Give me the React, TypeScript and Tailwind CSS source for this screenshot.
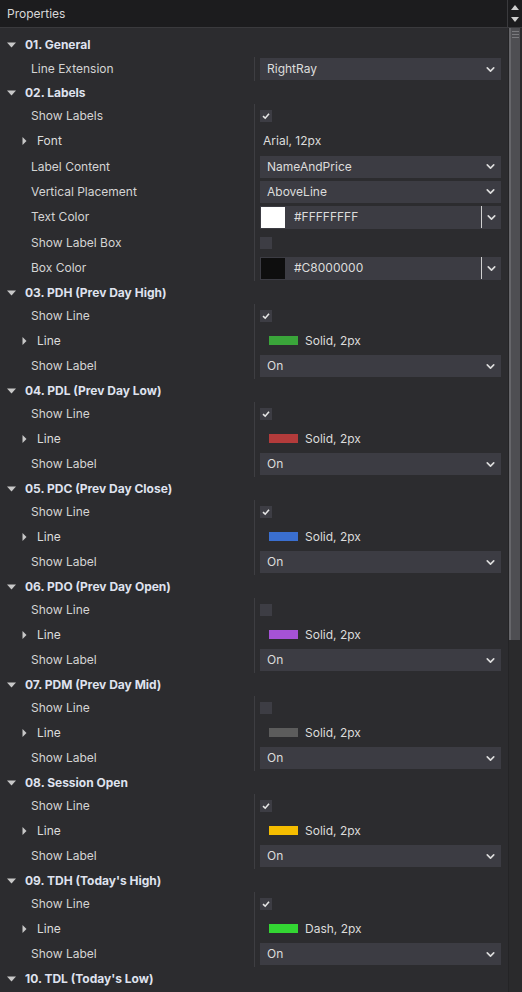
import { ChevronDown } from 'lucide-react';

type Row =
  | { kind: 'header'; label: string; h: number }
  | { kind: 'select'; label: string; value: string; h: number }
  | { kind: 'check'; label: string; checked: boolean; h: number }
  | { kind: 'font'; label: string; value: string; h: number }
  | { kind: 'color'; label: string; value: string; swatch: string; h: number }
  | { kind: 'line'; label: string; value: string; swatch: string; h: number };

const HEIGHTS: Record<number, string> = {
  23: 'h-[23px]',
  24: 'h-[24px]',
  25: 'h-[25px]',
  26: 'h-[26px]',
};

const LINE_SECTIONS = [
  { title: '03. PDH (Prev Day High)', show: true, swatch: 'bg-[#3aa53a]', style: 'Solid, 2px' },
  { title: '04. PDL (Prev Day Low)', show: true, swatch: 'bg-[#b33b3b]', style: 'Solid, 2px' },
  { title: '05. PDC (Prev Day Close)', show: true, swatch: 'bg-[#3a6fd0]', style: 'Solid, 2px' },
  { title: '06. PDO (Prev Day Open)', show: false, swatch: 'bg-[#a552d6]', style: 'Solid, 2px' },
  { title: '07. PDM (Prev Day Mid)', show: false, swatch: 'bg-[#5c5c5c]', style: 'Solid, 2px' },
  { title: '08. Session Open', show: true, swatch: 'bg-[#f5bd00]', style: 'Solid, 2px' },
  { title: "09. TDH (Today's High)", show: true, swatch: 'bg-[#33d633]', style: 'Dash, 2px' },
];

const ROWS: Row[] = [
  { kind: 'header', label: '01. General', h: 24 },
  { kind: 'select', label: 'Line Extension', value: 'RightRay', h: 24 },
  { kind: 'header', label: '02. Labels', h: 23 },
  { kind: 'check', label: 'Show Labels', checked: true, h: 24 },
  { kind: 'font', label: 'Font', value: 'Arial, 12px', h: 26 },
  { kind: 'select', label: 'Label Content', value: 'NameAndPrice', h: 25 },
  { kind: 'select', label: 'Vertical Placement', value: 'AboveLine', h: 25 },
  { kind: 'color', label: 'Text Color', value: '#FFFFFFFF', swatch: 'bg-white', h: 26 },
  { kind: 'check', label: 'Show Label Box', checked: false, h: 25 },
  { kind: 'color', label: 'Box Color', value: '#C8000000', swatch: 'bg-[#0e0e0e]', h: 26 },
  ...LINE_SECTIONS.flatMap((s): Row[] => [
    { kind: 'header', label: s.title, h: 23 },
    { kind: 'check', label: 'Show Line', checked: s.show, h: 24 },
    { kind: 'line', label: 'Line', value: s.style, swatch: s.swatch, h: 25 },
    { kind: 'select', label: 'Show Label', value: 'On', h: 26 },
  ]),
  { kind: 'header', label: "10. TDL (Today's Low)", h: 23 },
];

function DownTriangle() {
  return (
    <svg width="9" height="6" viewBox="0 0 9 6" className="shrink-0">
      <path d="M0 0.5 L9 0.5 L4.5 5.5 Z" fill="#c8c8c8" />
    </svg>
  );
}

function RightTriangle() {
  return (
    <svg width="5" height="8" viewBox="0 0 5 8" className="shrink-0">
      <path d="M0.5 0 L4.5 4 L0.5 8 Z" fill="#c8c8c8" />
    </svg>
  );
}

function Check({ checked }: { checked: boolean }) {
  return (
    <div className="w-[12px] h-[12px] bg-[#3d3d44] flex items-center justify-center">
      {checked && (
        <svg width="8" height="8" viewBox="0 0 8 8">
          <path d="M1 4.2 L3.2 6.2 L7 1.8" stroke="#e6e6e6" strokeWidth="1.6" fill="none" />
        </svg>
      )}
    </div>
  );
}

function Value({ row }: { row: Row }) {
  switch (row.kind) {
    case 'select':
      return (
        <div className="h-[22px] flex-1 bg-[#3c3c43] flex items-center pl-[7px] pr-[4px] text-[#dcdcdc]">
          <span className="flex-1">{row.value}</span>
          <ChevronDown size={13} strokeWidth={3} color="#dcdcdc" />
        </div>
      );
    case 'check':
      return <Check checked={row.checked} />;
    case 'font':
      return <span className="pl-[3px] text-[#dcdcdc]">{row.value}</span>;
    case 'color':
      return (
        <div className="h-[23px] flex-1 bg-[#3c3c43] flex items-center text-[#dcdcdc]">
          <div className={`w-[24px] h-[21px] ml-[1px] ${row.swatch}`} />
          <span className="flex-1 pl-[9px]">{row.value}</span>
          <div className="w-px h-[22px] bg-[#d0d0d0]" />
          <div className="w-[19px] flex justify-center">
            <ChevronDown size={13} strokeWidth={3} color="#dcdcdc" />
          </div>
        </div>
      );
    case 'line':
      return (
        <div className="flex items-center gap-[7px] pl-[9px] text-[#dcdcdc]">
          <div className={`w-[29px] h-[9px] ${row.swatch}`} />
          <span>{row.value}</span>
        </div>
      );
    default:
      return null;
  }
}

function PropertyRow({ row }: { row: Row }) {
  if (row.kind === 'header') {
    return (
      <div className={`${HEIGHTS[row.h]} flex items-center pl-[7px] gap-[9px]`}>
        <DownTriangle />
        <span className="font-bold text-[#dfe2ee]">{row.label}</span>
      </div>
    );
  }
  const expandable = row.kind === 'font' || row.kind === 'line';
  return (
    <div className={`${HEIGHTS[row.h]} flex items-center`}>
      <div className="w-[254px] flex items-center">
        {expandable ? (
          <div className="flex items-center pl-[22px] gap-[10px]">
            <RightTriangle />
            <span className="text-[#dcdcdc]">{row.label}</span>
          </div>
        ) : (
          <span className="pl-[31px] text-[#d4d4d4]">{row.label}</span>
        )}
      </div>
      <div className="w-px self-stretch bg-[#3e3e42]" />
      <div className="flex-1 flex items-center pl-[5px] pr-[7px]">
        <Value row={row} />
      </div>
    </div>
  );
}

export default function App() {
  return (
    <div
      className="w-[522px] h-[992px] overflow-hidden bg-[#2c2c2f] flex flex-col text-[12px] leading-none"
      style={{ fontFamily: 'Inter, "Noto Sans", sans-serif' }}
    >
      <div className="h-[28px] shrink-0 flex bg-[#1c1c1e] border-b border-[#3a3a3d]">
        <div className="flex-1 flex items-center pl-[7px] text-[#d8d8d8] text-[12px]">Properties</div>
        <div className="w-[15px] border-l border-[#3a3a3d] flex flex-col items-center justify-center gap-[7px]">
          <svg width="8" height="5" viewBox="0 0 8 5">
            <path d="M0 5 L4 0 L8 5 Z" fill="#cfcfcf" />
          </svg>
          <svg width="8" height="5" viewBox="0 0 8 5">
            <path d="M0 0 L8 0 L4 5 Z" fill="#cfcfcf" />
          </svg>
        </div>
      </div>
      <div className="flex-1 flex min-h-0">
        <div className="flex-1 pt-[5px] overflow-hidden">
          {ROWS.map((row, i) => (
            <PropertyRow key={i} row={row} />
          ))}
        </div>
        <div className="w-[14px] bg-[#2a2a2c] border-l border-[#242426] flex flex-col">
          <div className="h-[612px] w-[11px] bg-[#4e4e52] border-l-2 border-[#66666a] flex flex-col items-center pt-[3px] gap-[2px]">
            <div className="w-[7px] h-px bg-[#7a7a7e]" />
            <div className="w-[7px] h-px bg-[#7a7a7e]" />
            <div className="w-[7px] h-px bg-[#7a7a7e]" />
          </div>
        </div>
      </div>
    </div>
  );
}
